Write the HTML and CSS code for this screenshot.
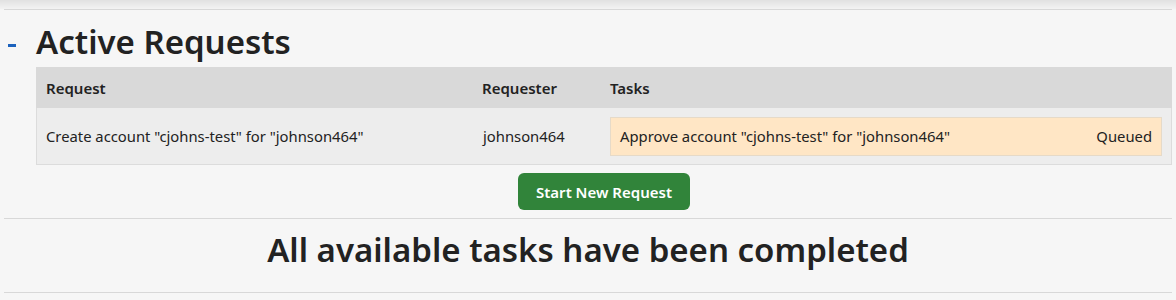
FILE: index.html
```html
<!DOCTYPE html>
<html lang="en">
<head>
  <meta charset="UTF-8" />
  <title>Requests</title>
  <link rel="stylesheet" href="styles.css">
</head>
<body>
  <div class="shade"></div>
  <div class="page">
    <div class="section">
      <div class="section-head">
        <span class="toggle"></span>
        <h2>Active Requests</h2>
      </div>
      <div class="requests">
        <div class="row head">
          <div class="cell">Request</div>
          <div class="cell">Requester</div>
          <div class="cell">Tasks</div>
        </div>
        <div class="row body">
          <div class="cell">Create account "cjohns-test" for "johnson464"</div>
          <div class="cell">johnson464</div>
          <div class="cell tasks">
            <div class="task">
              <span>Approve account "cjohns-test" for "johnson464"</span>
              <span>Queued</span>
            </div>
          </div>
        </div>
      </div>
      <button class="start-btn">Start New Request</button>
    </div>
    <div class="done">
      <h2>All available tasks have been completed</h2>
    </div>
  </div>
</body>
</html>
```

FILE: styles.css
```css
body {
  margin: 0;
  background: #f6f6f6;
  font-family: "Noto Sans", "DejaVu Sans", sans-serif;
  color: #222;
}
.shade {
  height: 9px;
  background: linear-gradient(#e1e1e1, #f3f3f3);
}
.page {
  padding: 0 4px;
}
.section {
  border-top: 1px solid #d8d8d8;
  padding-bottom: 8px;
}
.section-head {
  display: flex;
  align-items: flex-end;
  height: 57px;
}
.toggle {
  align-self: flex-start;
  width: 8px;
  height: 3px;
  background: #1c62bd;
  margin: 34px 20px 0 4px;
}
h2 {
  margin: 0;
  font-size: 33px;
  line-height: 45px;
  font-weight: 600;
}
.section-head h2 {
  margin-bottom: 3px;
}
.requests {
  margin-left: 32px;
}
.row {
  display: grid;
  grid-template-columns: 436px 128px 1fr;
  align-items: center;
}
.row.head {
  height: 41px;
  background: #d9d9d9;
  font-weight: 600;
  font-size: 15px;
}
.row.body {
  height: 56px;
  background: #ededed;
  border: 1px solid #dcdcdc;
  border-top: none;
  font-size: 14.8px;
}
.cell {
  padding: 0 10px;
}
.row.body .cell:first-child {
  padding-left: 9px;
}
.cell.tasks {
  padding: 0 9px;
}
.task {
  display: flex;
  justify-content: space-between;
  align-items: center;
  height: 37px;
  padding: 0 9px;
  background: #ffe6c5;
  border: 1px solid #e6dac8;
}
.start-btn {
  display: block;
  margin: 8px auto 0;
  padding: 0 18px;
  height: 37px;
  border: none;
  border-radius: 6px;
  background: #31843a;
  color: #fff;
  font-family: inherit;
  font-size: 15px;
  font-weight: 600;
  transform: translateX(16px);
}
.done {
  box-sizing: border-box;
  height: 75px;
  padding-bottom: 12px;
  border-top: 1px solid #d8d8d8;
  border-bottom: 1px solid #d8d8d8;
  display: flex;
  align-items: center;
  justify-content: center;
}
```
